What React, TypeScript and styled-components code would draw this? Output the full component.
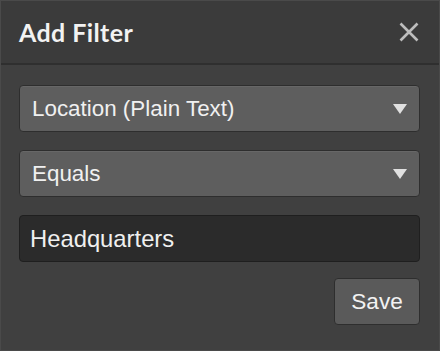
import styled, { createGlobalStyle } from "styled-components";

const GlobalStyle = createGlobalStyle`
  html, body {
    margin: 0;
    padding: 0;
    background: #404040;
  }
  * {
    box-sizing: border-box;
  }
`;

const Panel = styled.div`
  width: 440px;
  height: 351px;
  background-color: #404040;
  border: 1px solid #4a4a4a;
  display: flex;
  flex-direction: column;
  font-family: "Liberation Sans", Arial, sans-serif;
  color: #f0f0f0;
`;

const Header = styled.div`
  height: 64px;
  background-color: #3b3b3b;
  border-bottom: 2px solid #2f2f2f;
  display: flex;
  align-items: center;
  justify-content: space-between;
  padding: 0 18px 0 18px;
`;

const Title = styled.h2`
  margin: 0;
  font-family: Lato, "Open Sans", sans-serif;
  font-weight: 700;
  font-size: 25px;
  letter-spacing: 0.4px;
  color: #f2f2f2;
`;

const CloseButton = styled.button`
  background: none;
  border: none;
  padding: 0;
  width: 24px;
  height: 24px;
  display: flex;
  align-items: center;
  justify-content: center;
  cursor: pointer;
  color: #bdbdbd;
`;

const Body = styled.div`
  display: flex;
  flex-direction: column;
  gap: 18px;
  padding: 20px 19px 0 18px;
`;

const SelectBox = styled.div`
  height: 47px;
  background-color: #5e5e5e;
  border: 1px solid #2e2e2e;
  border-radius: 4px;
  display: flex;
  align-items: center;
  justify-content: space-between;
  padding: 0 12px 0 12px;
  font-size: 22.4px;
  box-shadow: inset 0 1px 0 rgba(255, 255, 255, 0.06);
  cursor: pointer;
`;

const Caret = styled.span`
  width: 0;
  height: 0;
  border-left: 7px solid transparent;
  border-right: 7px solid transparent;
  border-top: 10px solid #e0e0e0;
`;

const TextInput = styled.input`
  height: 47px;
  background-color: #2b2b2b;
  border: 1px solid #1f1f1f;
  border-radius: 4px;
  padding: 0 10px;
  font-family: "Liberation Sans", Arial, sans-serif;
  font-size: 23.8px;
  color: #f0f0f0;
  outline: none;
`;

const Actions = styled.div`
  display: flex;
  justify-content: flex-end;
  margin-top: -2px;
`;

const SaveButton = styled.button`
  width: 86px;
  height: 47px;
  padding: 0;
  background-color: #5a5a5a;
  border: 1px solid #2e2e2e;
  border-radius: 4px;
  font-family: "Liberation Sans", Arial, sans-serif;
  font-size: 22.6px;
  color: #f2f2f2;
  cursor: pointer;
`;

const Select = ({ label }: { label: string }) => (
  <SelectBox>
    <span>{label}</span>
    <Caret />
  </SelectBox>
);

export default function App() {
  return (
    <>
      <GlobalStyle />
      <Panel>
        <Header>
          <Title>Add Filter</Title>
          <CloseButton aria-label="Close">
            <svg width="20" height="20" viewBox="0 0 20 20">
              <path
                d="M1.5 1.5 L18.5 18.5 M18.5 1.5 L1.5 18.5"
                stroke="currentColor"
                strokeWidth="2.6"
              />
            </svg>
          </CloseButton>
        </Header>
        <Body>
          <Select label="Location (Plain Text)" />
          <Select label="Equals" />
          <TextInput defaultValue="Headquarters" />
          <Actions>
            <SaveButton>Save</SaveButton>
          </Actions>
        </Body>
      </Panel>
    </>
  );
}
